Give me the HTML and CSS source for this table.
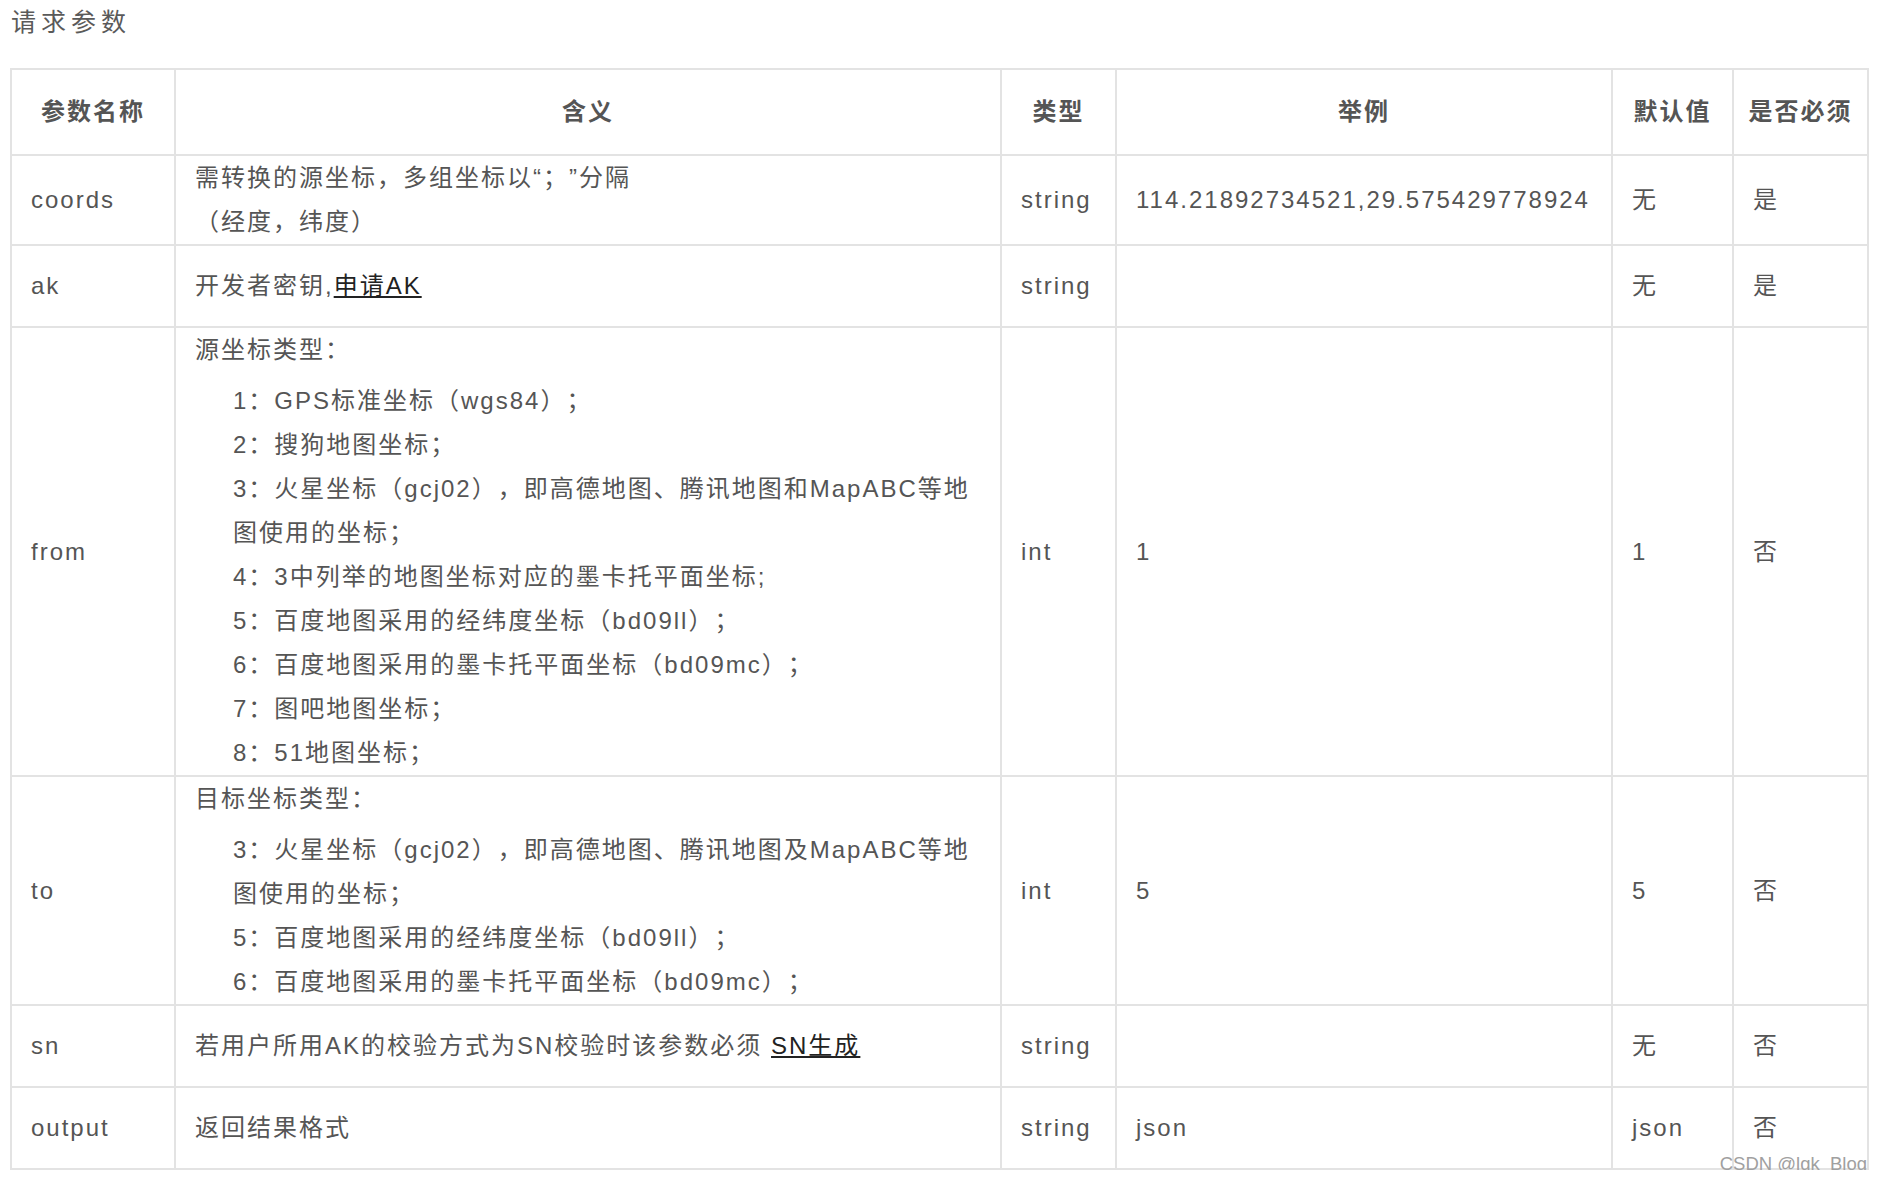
FILE: index.html
```html
<!DOCTYPE html>
<html lang="zh-CN">
<head>
<meta charset="utf-8">
<title>请求参数</title>
<link rel="stylesheet" href="styles.css">
</head>
<body>
<div class="page">
  <h3 class="title">请求参数</h3>
  <table class="params">
    <colgroup>
      <col class="c-name">
      <col class="c-desc">
      <col class="c-type">
      <col class="c-example">
      <col class="c-default">
      <col class="c-required">
    </colgroup>
    <thead>
      <tr>
        <th>参数名称</th>
        <th>含义</th>
        <th>类型</th>
        <th>举例</th>
        <th>默认值</th>
        <th>是否必须</th>
      </tr>
    </thead>
    <tbody>
      <tr>
        <td>coords</td>
        <td class="multi">需转换的源坐标，多组坐标以“；”分隔<br>（经度，纬度）</td>
        <td>string</td>
        <td>114.21892734521,29.575429778924</td>
        <td>无</td>
        <td>是</td>
      </tr>
      <tr>
        <td>ak</td>
        <td>开发者密钥,<a class="link" href="#">申请AK</a></td>
        <td>string</td>
        <td></td>
        <td>无</td>
        <td>是</td>
      </tr>
      <tr>
        <td>from</td>
        <td class="multi">
          <p class="lead">源坐标类型：</p>
          <ul class="opts">
            <li>1：GPS标准坐标（wgs84）；</li>
            <li>2：搜狗地图坐标；</li>
            <li>3：火星坐标（gcj02），即高德地图、腾讯地图和MapABC等地图使用的坐标；</li>
            <li>4：3中列举的地图坐标对应的墨卡托平面坐标;</li>
            <li>5：百度地图采用的经纬度坐标（bd09ll）；</li>
            <li>6：百度地图采用的墨卡托平面坐标（bd09mc）；</li>
            <li>7：图吧地图坐标；</li>
            <li>8：51地图坐标；</li>
          </ul>
        </td>
        <td>int</td>
        <td>1</td>
        <td>1</td>
        <td>否</td>
      </tr>
      <tr>
        <td>to</td>
        <td class="multi">
          <p class="lead">目标坐标类型：</p>
          <ul class="opts">
            <li>3：火星坐标（gcj02），即高德地图、腾讯地图及MapABC等地图使用的坐标；</li>
            <li>5：百度地图采用的经纬度坐标（bd09ll）；</li>
            <li>6：百度地图采用的墨卡托平面坐标（bd09mc）；</li>
          </ul>
        </td>
        <td>int</td>
        <td>5</td>
        <td>5</td>
        <td>否</td>
      </tr>
      <tr>
        <td>sn</td>
        <td>若用户所用AK的校验方式为SN校验时该参数必须 <a class="link" href="#">SN生成</a></td>
        <td>string</td>
        <td></td>
        <td>无</td>
        <td>否</td>
      </tr>
      <tr>
        <td>output</td>
        <td>返回结果格式</td>
        <td>string</td>
        <td>json</td>
        <td>json</td>
        <td>否</td>
      </tr>
    </tbody>
  </table>
  <div class="watermark">CSDN @lgk_Blog</div>
</div>
</body>
</html>
```

FILE: styles.css
```css
html, body {
  margin: 0;
  padding: 0;
  background: #ffffff;
}

body {
  font-family: "Liberation Sans", "Noto Sans CJK SC", sans-serif;
  color: #555555;
  text-spacing-trim: space-all;
}

.page {
  position: relative;
  padding: 0 0 0 10px;
  width: 1859px;
}

.title {
  margin: 0 0 24px 1px;
  font-size: 25px;
  line-height: 44px;
  font-weight: normal;
  letter-spacing: 5px;
  color: #5a5a5a;
}

.params {
  border-collapse: collapse;
  table-layout: fixed;
  width: 1859px;
  font-size: 24px;
  letter-spacing: 2px;
}

.c-name { width: 164px; }
.c-desc { width: 826px; }
.c-type { width: 115px; }
.c-example { width: 496px; }
.c-default { width: 121px; }
.c-required { width: 135px; }

.params th,
.params td {
  border: 2px solid #e3e3e3;
  vertical-align: middle;
  line-height: 44px;
}

.params th {
  padding: 20px 8px;
  text-align: center;
  font-weight: bold;
  letter-spacing: 2px;
  color: #555555;
}

.params td {
  padding: 18px 8px 18px 19px;
  text-align: left;
  white-space: normal;
}

.params td.multi {
  padding-top: 0;
  padding-bottom: 0;
  padding-right: 16px;
}

.lead {
  margin: 0 0 7px 0;
}

.opts {
  list-style: none;
  margin: 0;
  padding: 0 0 0 38px;
}

.opts li {
  margin: 0;
}

.link {
  color: #222222;
  text-decoration: underline;
}

.watermark {
  position: absolute;
  right: 2px;
  bottom: -4px;
  font-size: 18.5px;
  letter-spacing: 0;
  color: #a0a0a0;
  line-height: 20px;
}
```
